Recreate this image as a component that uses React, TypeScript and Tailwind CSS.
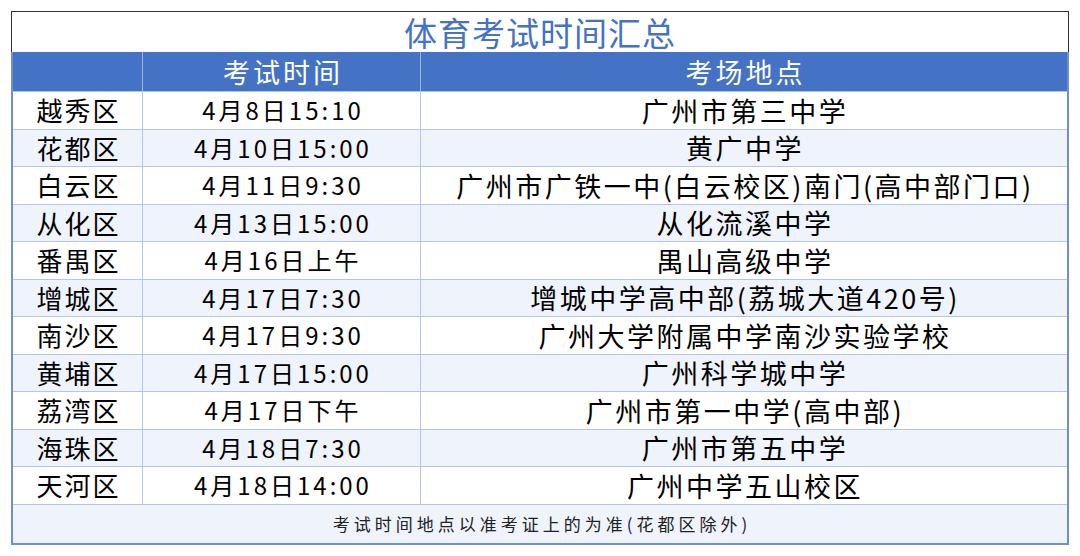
const rows: [string, string, string][] = [
  ["越秀区", "4月8日15:10", "广州市第三中学"],
  ["花都区", "4月10日15:00", "黄广中学"],
  ["白云区", "4月11日9:30", "广州市广铁一中(白云校区)南门(高中部门口)"],
  ["从化区", "4月13日15:00", "从化流溪中学"],
  ["番禺区", "4月16日上午", "禺山高级中学"],
  ["增城区", "4月17日7:30", "增城中学高中部(荔城大道420号)"],
  ["南沙区", "4月17日9:30", "广州大学附属中学南沙实验学校"],
  ["黄埔区", "4月17日15:00", "广州科学城中学"],
  ["荔湾区", "4月17日下午", "广州市第一中学(高中部)"],
  ["海珠区", "4月18日7:30", "广州市第五中学"],
  ["天河区", "4月18日14:00", "广州中学五山校区"],
];

export default function App() {
  return (
    <div
      className="w-[1080px] h-[556px] bg-white pt-[11px] pl-[11px]"
      style={{ fontFamily: '"Noto Sans CJK SC", "Noto Sans", sans-serif' }}
    >
      <div className="w-[1058px]">
        {/* title */}
        <div className="h-[41px] border-t border-l border-r border-[#333] flex items-center justify-center text-[#4472c4] text-[33px] leading-none tracking-[1px]">
          体育考试时间汇总
        </div>

        <div className="border-l-2 border-r-2 border-b-2 border-[#6f8fd3]">
          {/* header */}
          <div className="grid grid-cols-[130px_278px_1fr] h-[39px] bg-[#4472c4] text-white leading-none">
            <div className="border-r border-[#9db5e3]" />
            <div className="border-r border-[#9db5e3] flex items-center justify-center text-[27px] tracking-[3px] pl-[3px]">
              考试时间
            </div>
            <div className="flex items-center justify-center text-[27px] tracking-[3px] pl-[3px]">考场地点</div>
          </div>

          {/* body */}
          {rows.map(([d, t, p], i) => (
            <div
              key={d}
              className={`grid grid-cols-[130px_278px_1fr] h-[37.5px] border-t border-[#b4c6e7] text-black leading-none ${
                i % 2 === 1 ? "bg-[#eff3fb]" : "bg-white"
              }`}
            >
              <div className="border-r border-[#b4c6e7] flex items-center justify-center text-[26px] tracking-[2px] pl-[2px]">
                {d}
              </div>
              <div className="border-r border-[#b4c6e7] flex items-center justify-center text-[24px] tracking-[3px] pl-[3px]">
                {t}
              </div>
              <div className="flex items-center justify-center text-[27px] tracking-[2.5px] pl-[2px]">{p}</div>
            </div>
          ))}

          {/* footer note */}
          <div className="h-[39px] border-t border-[#b4c6e7] bg-[#eff3fb] flex items-center justify-center text-[#222] text-[17px] tracking-[4px] leading-none pl-[4px]">
            考试时间地点以准考证上的为准(花都区除外)
          </div>
        </div>
      </div>
    </div>
  );
}
